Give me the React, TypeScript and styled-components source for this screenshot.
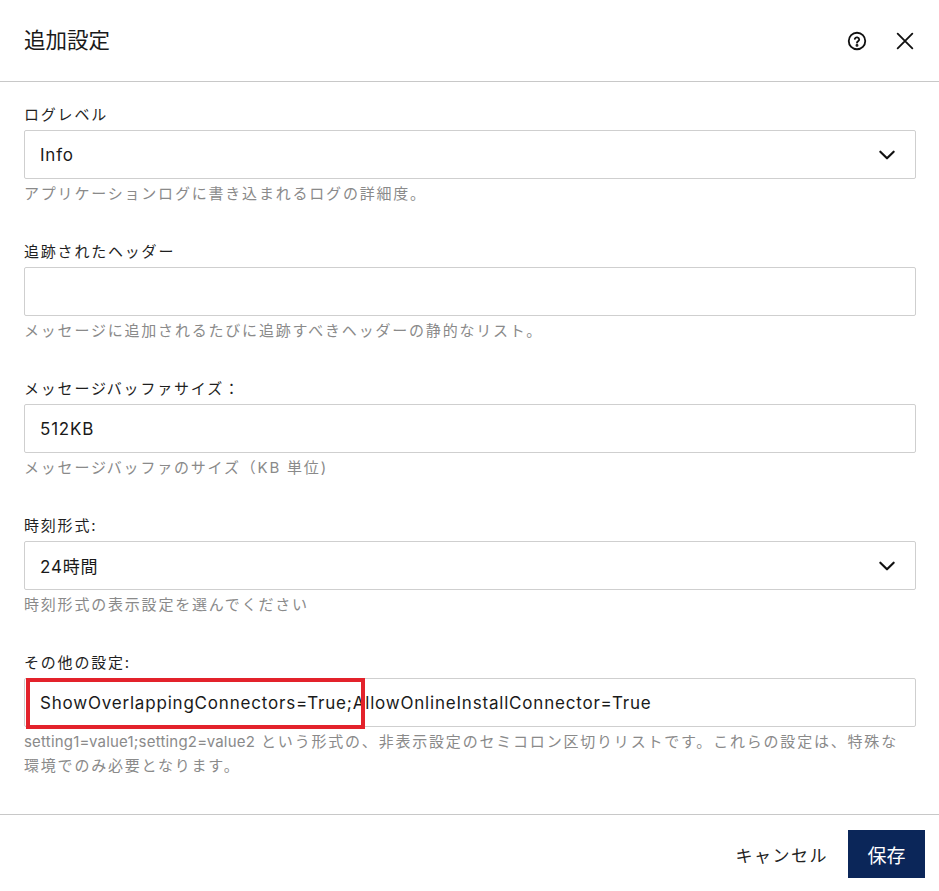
import React from "react";
import styled, { createGlobalStyle } from "styled-components";

const GlobalStyle = createGlobalStyle`
  html, body {
    margin: 0;
    padding: 0;
    background: #ffffff;
  }
  body {
    font-family: Inter, "Noto Sans CJK JP", sans-serif;
    color: #1f1f1f;
  }
`;

const Dialog = styled.div`
  width: 939px;
  height: 891px;
  display: flex;
  flex-direction: column;
  background: #fff;
  overflow: hidden;
`;

const Header = styled.div`
  flex-shrink: 0;
  height: 82px;
  display: flex;
  align-items: center;
  justify-content: space-between;
  padding: 0 22px 0 24px;
  border-bottom: 1px solid #c8c8c8;
  box-sizing: border-box;
`;

const Title = styled.h1`
  margin: 0;
  font-size: 21.5px;
  font-weight: 400;
  color: #1a1a1a;
  padding-bottom: 4px;
`;

const HeaderActions = styled.div`
  display: flex;
  align-items: center;
  gap: 24px;
`;

const IconButton = styled.button`
  border: none;
  background: none;
  padding: 0;
  width: 24px;
  height: 24px;
  display: flex;
  align-items: center;
  justify-content: center;
  cursor: pointer;
  color: #1a1a1a;
`;

const Body = styled.div`
  flex: 1;
  padding: 23px 23px 0 24px;
  display: flex;
  flex-direction: column;
`;

const Field = styled.div`
  display: flex;
  flex-direction: column;
  margin-bottom: 36px;
`;

const Label = styled.label`
  font-size: 15px;
  line-height: 20px;
  letter-spacing: 1.8px;
  color: #1f1f1f;
  margin-bottom: 5px;
`;

const InputWrap = styled.div`
  position: relative;
  height: 49px;
  box-sizing: border-box;
  border: 1px solid #cfcfcf;
  border-radius: 2px;
  display: flex;
  align-items: center;
  padding: 0 18px 0 15px;
  font-size: 17px;
  letter-spacing: 0.8px;
  color: #1a1a1a;
`;

const Value = styled.span`
  flex: 1;
  white-space: nowrap;
`;

const Help = styled.p`
  margin: 3px 0 0;
  padding-right: 12px;
  font-size: 15px;
  line-height: 24px;
  letter-spacing: 1.8px;
  color: #8a8a8a;
`;

const Code = styled.span`
  letter-spacing: 0.2px;
`;

const Highlight = styled.div`
  position: absolute;
  left: 1px;
  top: -1px;
  width: 339px;
  height: 51px;
  box-sizing: border-box;
  border: 4px solid #e3222b;
  pointer-events: none;
`;

const Footer = styled.div`
  flex-shrink: 0;
  height: 79px;
  box-sizing: border-box;
  border-top: 1px solid #c8c8c8;
  display: flex;
  align-items: center;
  justify-content: flex-end;
  gap: 20px;
  padding: 0 14px 0 0;
`;

const TextButton = styled.button`
  border: none;
  background: none;
  font-family: inherit;
  font-size: 17px;
  letter-spacing: 1.5px;
  color: #222;
  padding: 0;
  cursor: pointer;
`;

const PrimaryButton = styled.button`
  border: none;
  background: #0b2659;
  color: #fff;
  font-family: inherit;
  font-size: 19px;
  width: 77px;
  height: 48px;
  cursor: pointer;
`;

const Chevron = () => (
  <svg width="20" height="20" viewBox="0 0 24 24" fill="none" stroke="#111" strokeWidth="2.6" strokeLinecap="round" strokeLinejoin="round">
    <polyline points="4 8 12 16 20 8" />
  </svg>
);

type FieldDef = {
  label: string;
  value: string;
  select?: boolean;
  highlight?: boolean;
  help: React.ReactNode;
};

const fields: FieldDef[] = [
  { label: "ログレベル", value: "Info", select: true, help: "アプリケーションログに書き込まれるログの詳細度。" },
  { label: "追跡されたヘッダー", value: "", help: "メッセージに追加されるたびに追跡すべきヘッダーの静的なリスト。" },
  { label: "メッセージバッファサイズ：", value: "512KB", help: "メッセージバッファのサイズ（KB 単位)" },
  { label: "時刻形式:", value: "24時間", select: true, help: "時刻形式の表示設定を選んでください" },
  {
    label: "その他の設定:",
    value: "ShowOverlappingConnectors=True;AllowOnlineInstallConnector=True",
    highlight: true,
    help: (
      <>
        <Code>setting1=value1;setting2=value2</Code>
        {" という形式の、非表示設定のセミコロン区切りリストです。これらの設定は、特殊な環境でのみ必要となります。"}
      </>
    ),
  },
];

export default function App() {
  return (
    <>
      <GlobalStyle />
      <Dialog>
        <Header>
          <Title>追加設定</Title>
          <HeaderActions>
            <IconButton aria-label="help">
              <svg width="22" height="22" viewBox="0 0 24 24" fill="none" stroke="#111" strokeWidth="2">
                <circle cx="12" cy="12" r="9" />
                <path d="M9.6 9.6a2.5 2.5 0 0 1 4.8.8c0 1.6-2.4 2-2.4 3.4" strokeLinecap="round" />
                <circle cx="12" cy="16.8" r="0.6" fill="#111" />
              </svg>
            </IconButton>
            <IconButton aria-label="close">
              <svg width="22" height="22" viewBox="0 0 24 24" fill="none" stroke="#111" strokeWidth="2" strokeLinecap="round">
                <path d="M4 4L20 20M20 4L4 20" />
              </svg>
            </IconButton>
          </HeaderActions>
        </Header>
        <Body>
          {fields.map((f) => (
            <Field key={f.label}>
              <Label>{f.label}</Label>
              <InputWrap>
                <Value>{f.value}</Value>
                {f.select && <Chevron />}
                {f.highlight && <Highlight />}
              </InputWrap>
              <Help>{f.help}</Help>
            </Field>
          ))}
        </Body>
        <Footer>
          <TextButton>キャンセル</TextButton>
          <PrimaryButton>保存</PrimaryButton>
        </Footer>
      </Dialog>
    </>
  );
}
